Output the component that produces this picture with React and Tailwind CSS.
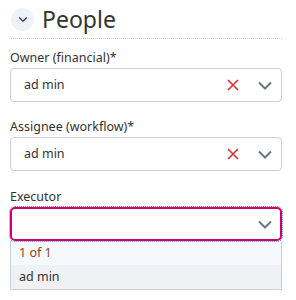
import React from "react";

const Chevron = ({ className }) => (
  <svg className={className} viewBox="0 0 16 16" fill="none" stroke="currentColor" strokeWidth="2" aria-hidden="true">
    <path d="M2 5.5l6 6 6-6" />
  </svg>
);

const Cross = () => (
  <svg className="w-[14px] h-[14px] text-[#d9322d]" viewBox="0 0 14 14" fill="none" stroke="currentColor" strokeWidth="1.6" aria-hidden="true">
    <path d="M2 2l10 10M12 2L2 12" />
  </svg>
);

const Field = ({ label, value, top }) => (
  <div className={top}>
    <div className="text-[12.5px] leading-[18px] text-[#333]">{label}</div>
    <div className="mt-[1px] h-[34px] rounded-[4px] border border-[#cfcfcf] bg-white flex items-center pl-[13px] pr-[8px]">
      <span className="flex-1 text-[12.5px] text-[#333]">{value}</span>
      <Cross />
      <Chevron className="ml-[17px] w-[16px] h-[16px] text-[#6b7686]" />
    </div>
  </div>
);

export default function App() {
  return (
    <div className="w-[296px] h-[300px] bg-white pl-[10px] pr-[14px] pt-[7px] font-['Noto_Sans',sans-serif]">
      <div className="flex items-center gap-[8px] pl-[1px]">
        <div className="w-[23px] h-[23px] rounded-full bg-[#eef3f9] flex items-center justify-center">
          <Chevron className="w-[10px] h-[10px] text-[#333]" />
        </div>
        <h2 className="text-[23px] leading-[24px] text-[#333]">People</h2>
      </div>
      <div className="mt-[7px] ml-[1px] border-b border-dotted border-[#c8c8c8]" />
      <Field label="Owner (financial)*" value="ad min" top="mt-[10px]" />
      <Field label="Assignee (workflow)*" value="ad min" top="mt-[16px]" />
      <div className="mt-[17px]">
        <div className="text-[12.5px] leading-[18px] text-[#333]">Executor</div>
        <div className="mt-[1px]">
          <div className="h-[34px] rounded-[5px] border-2 border-[#d0006f] outline-1 outline-dotted outline-[#5b7fb0] flex items-center justify-end pr-[7px]">
            <Chevron className="w-[16px] h-[16px] text-[#6b7686]" />
          </div>
          <div className="border border-t-0 border-[#c5d2e0] text-[12.5px]">
            <div className="h-[24px] bg-[#f6f9fc] flex items-center pl-[8px] text-[#8b4513]">1 of 1</div>
            <div className="h-[24px] bg-[#f0f1f2] flex items-center pl-[8px] text-[#333]">ad min</div>
          </div>
        </div>
      </div>
    </div>
  );
}
